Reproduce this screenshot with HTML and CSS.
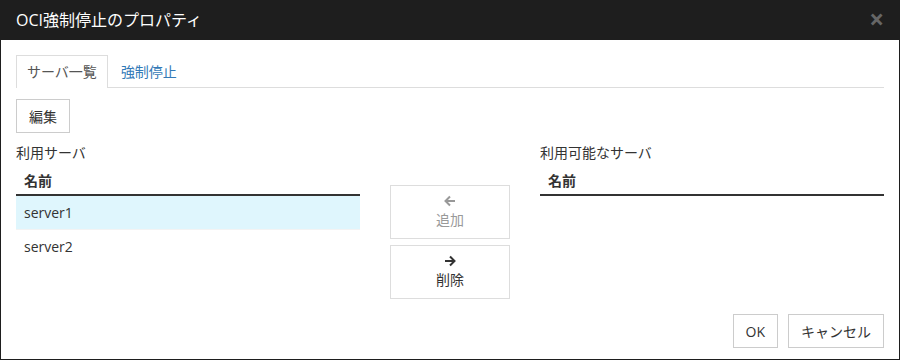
FILE: index.html
```html
<!DOCTYPE html>
<html lang="ja">
<head>
  <meta charset="UTF-8">
  <title>OCI強制停止のプロパティ</title>
  <link rel="stylesheet" href="styles.css">
</head>
<body>
  <div class="modal">
    <div class="modal-header">
      <h4>OCI強制停止のプロパティ</h4>
      <span class="close">&times;</span>
    </div>

    <div class="modal-body">
      <ul class="tabs">
        <li class="tab active">サーバ一覧</li>
        <li class="tab">強制停止</li>
      </ul>

      <button class="btn edit">編集</button>

      <div class="columns">
        <div class="column">
          <div class="label">利用サーバ</div>
          <table>
            <thead>
              <tr><th>名前</th></tr>
            </thead>
            <tbody>
              <tr class="selected"><td>server1</td></tr>
              <tr><td>server2</td></tr>
            </tbody>
          </table>
        </div>

        <div class="actions">
          <button class="btn move" disabled>
            <svg class="arrow" viewBox="0 0 12 12" width="12" height="12"><path d="M11 6H2M6 1.5L1.5 6 6 10.5" /></svg>
            <span>追加</span>
          </button>
          <button class="btn move">
            <svg class="arrow" viewBox="0 0 12 12" width="12" height="12"><path d="M1 6h9M6 1.5L10.5 6 6 10.5" /></svg>
            <span>削除</span>
          </button>
        </div>

        <div class="column">
          <div class="label">利用可能なサーバ</div>
          <table>
            <thead>
              <tr><th>名前</th></tr>
            </thead>
            <tbody></tbody>
          </table>
        </div>
      </div>
    </div>

    <div class="modal-footer">
      <button class="btn">OK</button>
      <button class="btn">キャンセル</button>
    </div>
  </div>
</body>
</html>
```

FILE: styles.css
```css
/* Global */
html, body {
  margin: 0;
  padding: 0;
}

body {
  font-family: "Open Sans", "Noto Sans CJK JP", sans-serif;
  font-size: 14px;
  color: #333;
  background: #fff;
}

.modal {
  width: 900px;
  height: 360px;
  box-sizing: border-box;
  border: 1px solid #1e1e1e;
  border-top: none;
  display: flex;
  flex-direction: column;
}

/* Header */
.modal-header {
  height: 40px;
  background: #1e1e1e;
  display: flex;
  align-items: center;
  justify-content: space-between;
  padding: 0 15px;
}

.modal-header h4 {
  margin: 0 0 2px;
  color: #fff;
  font-size: 16px;
  font-weight: normal;
}

.close {
  color: #666;
  font-size: 26px;
  font-weight: bold;
  line-height: 1;
  margin-top: -2px;
}

/* Body */
.modal-body {
  flex: 1;
  padding: 15px 15px 0;
}

.tabs {
  list-style: none;
  margin: 0;
  padding: 0;
  display: flex;
  border-bottom: 1px solid #ddd;
}

.tab {
  height: 31px;
  line-height: 31px;
  padding: 0 10px;
  margin-bottom: -1px;
  color: #337ab7;
  border: 1px solid transparent;
  border-bottom: none;
}

.tab.active {
  color: #555;
  background: #fff;
  border-color: #ddd;
  height: 32px;
}

.tab + .tab {
  margin-left: 2px;
}

.btn {
  font-family: inherit;
  font-size: 14px;
  color: #333;
  background: #fff;
  border: 1px solid #ccc;
  border-radius: 0;
  height: 34px;
  padding: 0 12px;
}

.edit {
  margin-top: 11px;
  display: block;
}

.columns {
  display: flex;
  margin-top: 11px;
}

.column {
  width: 344px;
}

.label {
  height: 18px;
  line-height: 18px;
}

table {
  width: 100%;
  border-collapse: collapse;
  margin-top: 8px;
}

th, td {
  text-align: left;
  padding: 0 8px;
}

th {
  height: 24px;
  font-weight: bold;
  vertical-align: top;
  border-bottom: 2px solid #333;
}

td {
  height: 33px;
  border-bottom: 1px solid #f3f3f3;
}

tbody tr:last-child td {
  border-bottom: none;
}

tr.selected td {
  background: #dff6fd;
}

/* Move buttons */
.actions {
  width: 180px;
  display: flex;
  flex-direction: column;
  align-items: center;
  gap: 6px;
  padding-top: 41px;
}

.move {
  width: 120px;
  height: 54px;
  display: flex;
  flex-direction: column;
  align-items: center;
  justify-content: center;
  gap: 4px;
  line-height: 18px;
  border-color: #ddd;
}

.move:disabled {
  color: #999;
}

.arrow {
  fill: none;
  stroke: currentColor;
  stroke-width: 2;
}

/* Footer */
.modal-footer {
  display: flex;
  justify-content: flex-end;
  gap: 10px;
  padding: 0 15px 11px;
}
```
